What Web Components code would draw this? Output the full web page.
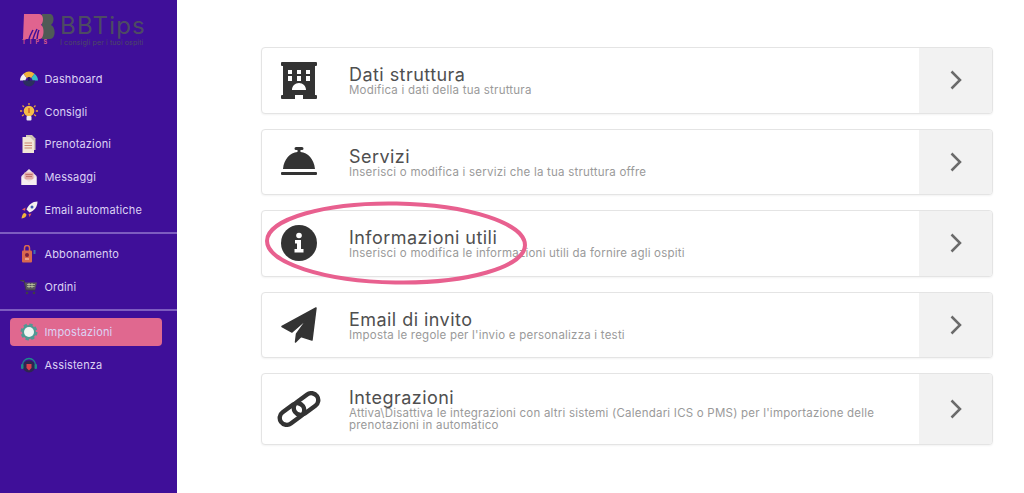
<!DOCTYPE html>
<html lang="it"><head><meta charset="utf-8"><title>BBTips</title>
<style>
html,body{margin:0;height:100%;background:#fff}
body{font-family:"Inter","Open Sans","Liberation Sans",sans-serif}
</style></head><body>
<app-shell>
  <bb-logo slot="side"></bb-logo>
  <nav-item slot="side"><svg slot="icon" viewBox="0 0 18 18"><path d="M0 10.500a9 9 0 0 1 3.500-6.800l3.200 4.300A3.500 3.500 0 0 0 5.500 10.500z" fill="#f6f3f1"/><path d="M3.500 3.700A9 9 0 0 1 14.500 3.700l-3.200 4.300a3.500 3.500 0 0 0-4.600 0z" fill="#f2b43c"/><path d="M14.500 3.700A9 9 0 0 1 18 10.500h-5.500a3.500 3.500 0 0 0-1.200-2.500z" fill="#36c2c6"/><path d="M3 10.500h12a6 6 0 0 1-12 0z" fill="#2b2f5e"/><path d="M9 7v4" stroke="#1e2245" stroke-width="1.500"/></svg>Dashboard</nav-item>
  <nav-item slot="side"><svg slot="icon" viewBox="0 0 18 18"><g stroke="#e9a13a" stroke-width="1.300"><path d="M9 0v2M2.500 2.500 4 4M15.500 2.500 14 4M0 8h2.200M15.800 8H18M2 13l2-1.500M16 13l-2-1.500"/></g><circle cx="9" cy="8" r="5.300" fill="#f6bd48"/><path d="M9 5v5" stroke="#d9722f" stroke-width="1.800"/><rect x="6.500" y="13" width="5" height="4.500" rx="1" fill="#ece8f2"/></svg>Consigli</nav-item>
  <nav-item slot="side"><svg slot="icon" viewBox="0 0 18 18"><path d="M6 0h6l3.500 3.500V15H6z" fill="#cfc4b4"/><path d="M2.500 2H10l4 4v12H2.500z" fill="#f1e6d6"/><path d="M4.500 8h7.500M4.500 10.500h7.500M4.500 13h7.500" stroke="#c98570" stroke-width="1"/></svg>Prenotazioni</nav-item>
  <nav-item slot="side"><svg slot="icon" viewBox="0 0 18 18"><path d="M1.500 8 9 1l7.500 7v9h-15z" fill="#efdfe2"/><rect x="4.500" y="4.500" width="9" height="7" fill="#e3aaa6"/><path d="M5.500 6.500h7M6 8.500h6" stroke="#b9645f" stroke-width=".8"/><path d="M1.500 8.500 9 14l7.500-5.500V17h-15z" fill="#f6eef0"/></svg>Messaggi</nav-item>
  <nav-item slot="side"><svg slot="icon" viewBox="0 0 18 18"><path d="M17.500.5c-5 0-9 3-11 8l3 3c5-2 8-6 8-11z" fill="#f4f1ee"/><circle cx="12" cy="6" r="1.500" fill="#3c5bb0"/><path d="M5.500 6.500 2 8.500l3 1.200zM11.500 12.500l-2 3.500-1-3z" fill="#e25d5d"/><path d="M5 12c-2 0-3 2-3.500 5.500 3-.5 5-1.500 5-4z" fill="#f2b43c"/></svg>Email automatiche</nav-item>
  <nav-rule slot="side"></nav-rule>
  <nav-item slot="side"><svg slot="icon" viewBox="0 0 18 18"><path d="M4.500 6V3a2.500 2.500 0 0 1 5 0v3" fill="none" stroke="#d9694f" stroke-width="1.500"/><rect x="2" y="5.500" width="10" height="12" rx="1" fill="#d9694f"/><circle cx="7" cy="10" r="2" fill="#7a2040"/><rect x="5" y="13" width="4" height="2" fill="#e9a08a"/><path d="M14.500 9V5" stroke="#3c6fb0" stroke-width="2"/></svg>Abbonamento</nav-item>
  <nav-item slot="side"><svg slot="icon" viewBox="0 0 18 18"><path d="M1 3h3l2 9h9l2-7.500H5z" fill="#5a5660"/><path d="M0 2.500h4l2 9.500h9.500" fill="none" stroke="#3f3d46" stroke-width="1"/><path d="M7 6.500h8M7 8.500h7.500M9 5v5M12 5v5" stroke="#c9d6a8" stroke-width=".7"/><circle cx="7" cy="15" r="1.300" fill="#3f3d46"/><circle cx="14" cy="15" r="1.300" fill="#3f3d46"/></svg>Ordini</nav-item>
  <nav-rule slot="side"></nav-rule>
  <nav-item slot="side" active><svg slot="icon" viewBox="0 0 18 18"><circle cx="9" cy="9" r="7" fill="#4f9a94"/><circle cx="9" cy="9" r="7.500" fill="none" stroke="#4f9a94" stroke-width="2" stroke-dasharray="3.500 2.400"/><circle cx="9" cy="9" r="5" fill="#f0f6f3"/></svg>Impostazioni</nav-item>
  <nav-item slot="side"><svg slot="icon" viewBox="0 0 18 18"><path d="M2.500 9a6.500 6.500 0 0 1 13 0" fill="none" stroke="#1f8a8a" stroke-width="1.300"/><circle cx="9" cy="10.500" r="6" fill="#2d2650"/><path d="M6.500 8h5v4l-2.500 2.500L6.500 12z" fill="#d8404f"/><rect x="1" y="8" width="2.500" height="5" rx="1" fill="#1f8a8a"/><rect x="14.500" y="8" width="2.500" height="5" rx="1" fill="#1f8a8a"/></svg>Assistenza</nav-item>

  <set-card heading="Dati struttura" text="Modifica i dati della tua struttura">
    <svg slot="icon" width="36" height="37" viewBox="0 0 36 37"><path fill="#333" fill-rule="evenodd" d="M1 0h34a1 1 0 0 1 1 1v2a1 1 0 0 1-1 1h-1v29h1a1 1 0 0 1 1 1v2a1 1 0 0 1-1 1H22v-4h-8v4H1a1 1 0 0 1-1-1v-2a1 1 0 0 1 1-1h1V4H1a1 1 0 0 1-1-1V1a1 1 0 0 1 1-1zM7 8v4h4V8zm9 0v4h4V8zm9 0v4h4V8zM7 14v5h4v-5zm9 0v5h4v-5zm9 0v5h4v-5zM11 28h14c0-4-3-7-7-7s-7 3-7 7z"/></svg>
  </set-card>
  <set-card heading="Servizi" text="Inserisci o modifica i servizi che la tua struttura offre">
    <svg slot="icon" width="36" height="29" viewBox="0 0 36 29"><path fill="#333" d="M15 0h6a1 1 0 0 1 0 3h-1.500v2.100C27 6 33 12 34 22H2C3 12 9 6 16.500 5.100V3H15a1 1 0 0 1 0-3zM1 25h34a1 1 0 0 1 1 1v1a1 1 0 0 1-1 1H1a1 1 0 0 1-1-1v-1a1 1 0 0 1 1-1z"/></svg>
  </set-card>
  <set-card heading="Informazioni utili" text="Inserisci o modifica le informazioni utili da fornire agli ospiti">
    <svg slot="icon" width="36" height="36" viewBox="0 0 36 36"><circle cx="18" cy="18" r="18" fill="#333"/><circle cx="18" cy="10.500" r="2.800" fill="#fff"/><path fill="#fff" d="M14 15h6v9h2.500v3.500h-9V24H16v-5.500h-2z"/></svg>
  </set-card>
  <set-card heading="Email di invito" text="Imposta le regole per l'invio e personalizza i testi">
    <svg slot="icon" width="36" height="36" viewBox="0 0 36 36"><path fill="#333" stroke="#333" stroke-width="1.500" stroke-linejoin="round" d="M35 1 1 19.500 11 25 27 11 15.500 27 14.500 35 20 29.500 31 33z"/></svg>
  </set-card>
  <set-card heading="Integrazioni" text="Attiva\Disattiva le integrazioni con altri sistemi (Calendari ICS o PMS) per l'importazione delle prenotazioni in automatico" tall>
    <svg slot="icon" width="44" height="36" viewBox="0 0 44 36"><g fill="none" stroke="#333" stroke-width="4.400"><rect x="1.500" y="16" width="27" height="14" rx="7" transform="rotate(-36 15 23)"/><rect x="15.500" y="6" width="27" height="14" rx="7" transform="rotate(-36 29 13)"/></g></svg>
  </set-card>
  <svg slot="over" width="266" height="88" viewBox="0 0 266 88"><ellipse cx="133" cy="44" rx="129" ry="39.500" transform="rotate(1 133 44)" fill="none" stroke="#e8608f" stroke-width="4"/></svg>
</app-shell>
<script>
const def=(name,html,cls)=>customElements.define(name,class extends HTMLElement{
  constructor(){super();this.attachShadow({mode:"open"}).innerHTML=html;}
  connectedCallback(){cls&&cls.call(this);}
});
def("app-shell",`<style>
:host{display:flex;width:1024px;height:493px;overflow:hidden;position:relative}
aside{width:177px;flex:none;background:#3f0f99;display:flex;flex-direction:column;color:#dcd2f4}
main{flex:1;display:flex;flex-direction:column;gap:15px;padding:47px 31px 0 84px;min-width:0}
.over{position:absolute;left:263px;top:199px;line-height:0;pointer-events:none}
</style><aside><slot name="side"></slot></aside><main><slot></slot></main><div class="over"><slot name="over"></slot></div>`);
def("bb-logo",`<style>
:host{display:flex;height:62.500px;box-sizing:border-box;padding:13px 0 0 22px;gap:5px;flex:none}
.mark{width:33px;display:flex;flex-direction:column;align-items:stretch}
.tips{font:700 5.500px "Inter",sans-serif;color:#d85c88;letter-spacing:4.200px;line-height:7px;margin-top:0;white-space:nowrap}
.t{color:#4d4b63;display:flex;flex-direction:column;padding-top:1px}
b{font:400 24px/24px "Inter",sans-serif;letter-spacing:1.200px;white-space:nowrap}
span{font:400 7px/8px "Inter",sans-serif;white-space:nowrap;margin-top:1px;letter-spacing:.12px}
</style><div class="mark"><svg width="33" height="26" viewBox="0 0 33 26"><path fill="#4f5a56" d="M20 1h8c4 0 5 8 1 11 5 2 5 14-1 14h-8z"/><path fill="#e0648f" d="M2 1h15c5 0 5 8 2 11 4 2 3 14-1 14H1z"/><path d="M7 26c1-4 3-7 4-9M11 26c1-4 3-8 4-10M15 26c.5-4 1-7 2-9" stroke="#3f0f99" stroke-width="1.500" fill="none"/></svg><div class="tips">TIPS</div></div><div class="t"><b>BBTips</b><span>I consigli per i tuoi ospiti</span></div>`);
def("nav-item",`<style>
:host{display:block;flex:none;height:32.800px;box-sizing:border-box;padding:2px 15px 2px 9.500px}
:host([active]){margin-top:1.500px}
div{height:100%;display:flex;align-items:center;gap:7px;padding-left:10px;border-radius:4px;font:400 11px "Inter",sans-serif;letter-spacing:.15px;color:#dcd2f4;white-space:nowrap}
:host([active]) div{background:#e0688f}
.i{width:18px;height:18px;flex:none;display:flex}
::slotted(svg){width:18px;height:18px}
</style><div><span class="i"><slot name="icon"></slot></span><span><slot></slot></span></div>`);
def("nav-rule",`<style>:host{display:block;flex:none;height:2px;background:#7d5cc0;margin:5.500px 0 3.500px}</style>`);
def("set-card",`<style>
:host{display:flex;height:66.500px;box-sizing:border-box;border:1px solid #e4e4e4;border-radius:4px;background:#fff;box-shadow:0 1px 2px rgba(0,0,0,.05);overflow:hidden;flex:none}
:host([tall]){height:72px}
.ic{width:74px;flex:none;display:flex;align-items:center;justify-content:center}
.b{flex:1;padding:2px 30px 0 13px;display:flex;flex-direction:column;justify-content:center;min-width:0}
h3{margin:0;font:400 18px/17px "Inter",sans-serif;letter-spacing:.45px;color:#4f4f4f}
p{margin:0;padding-top:2px;font:400 11.500px/11.500px "Inter",sans-serif;letter-spacing:.22px;color:#9a9a9a}
.go{width:73px;flex:none;background:#f2f2f2;display:flex;align-items:center;justify-content:center}
</style><div class="ic"><slot name="icon"></slot></div><div class="b"><h3></h3><p></p></div><div class="go"><svg width="12" height="20" viewBox="0 0 12 20"><path d="M1.500 1.500 10 10l-8.500 8.500" fill="none" stroke="#6b6b6b" stroke-width="2.500"/></svg></div>`,function(){
  this.shadowRoot.querySelector("h3").textContent=this.getAttribute("heading");
  this.shadowRoot.querySelector("p").textContent=this.getAttribute("text");
});
</script>
</body></html>
